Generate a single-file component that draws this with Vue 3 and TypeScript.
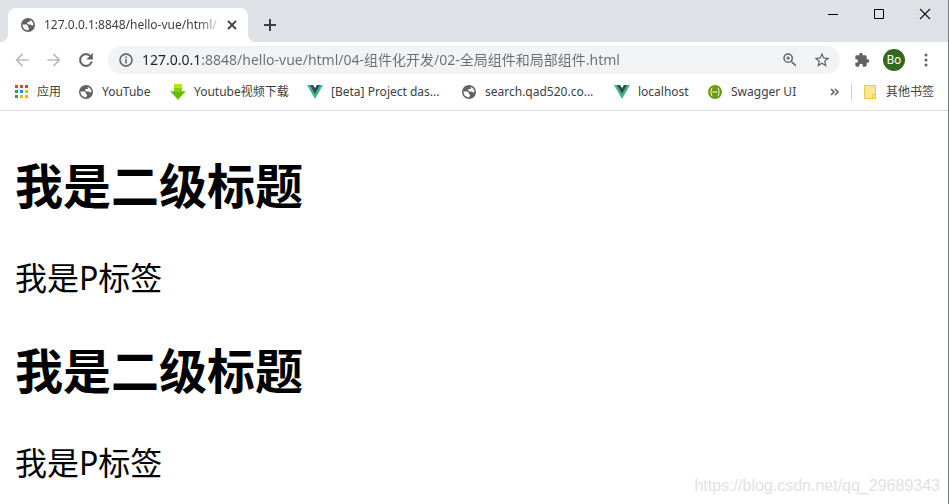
<script setup lang="ts">
import { ref } from 'vue'

interface Bookmark {
  label: string
  icon: 'apps' | 'globe' | 'download' | 'vue' | 'swagger'
}

const address = ref('127.0.0.1:8848/hello-vue/html/04-组件化开发/02-全局组件和局部组件.html')

const bookmarks: Bookmark[] = [
  { label: '应用', icon: 'apps' },
  { label: 'YouTube', icon: 'globe' },
  { label: 'Youtube视频下载', icon: 'download' },
  { label: '[Beta] Project das...', icon: 'vue' },
  { label: 'search.qad520.co...', icon: 'globe' },
  { label: 'localhost', icon: 'vue' },
  { label: 'Swagger UI', icon: 'swagger' },
]

const appColors = ['#f03a32', '#f03a32', '#f03a32', '#34a055', '#2a8cf0', '#f5b400', '#34a055', '#f5b400', '#f5b400']

const sections = [
  { title: '我是二级标题', text: '我是P标签' },
  { title: '我是二级标题', text: '我是P标签' },
]
</script>

<template>
  <div class="window">
    <header class="tabstrip">
      <div class="tab">
        <svg class="icon16" viewBox="0 0 16 16">
          <circle cx="8" cy="8" r="7" fill="#5f6368" />
          <path d="M2.5 7.6h3.2c1.5 0 2 .7 2 1.7s.6 1.2 1.3 1.2v1.2c0 .6-.9.6-.9 1.5v.2C4.6 13.4 2.500 11 2.500 7.600zM9.800 2.900c2 .8 3.500 2.500 3.700 4.800-.7.9-1.600.9-2.200.3-.4-.5-1-.5-1.800-.5-1.400 0-2.300-.5-2.300-1.300s.6-1.100 1.500-1.100 1.300-.3 1.300-.8-.3-.7-.2-1.400z" fill="#fff" />
        </svg>
        <span class="tab-title">127.0.0.1:8848/hello-vue/html/</span>
        <button class="plain" type="button" aria-label="关闭标签页">
          <svg class="icon16" viewBox="0 0 16 16"><path d="M4 4l8 8M12 4l-8 8" stroke="#3c4043" stroke-width="1.8" /></svg>
        </button>
      </div>
      <button class="plain new-tab" type="button" aria-label="打开新的标签页">
        <svg class="icon16" viewBox="0 0 16 16"><path d="M8 2v12M2 8h12" stroke="#3c4043" stroke-width="2" /></svg>
      </button>
      <div class="window-controls">
        <button class="plain" type="button" aria-label="最小化">
          <svg class="icon16" viewBox="0 0 16 16"><path d="M3 8.500h10" stroke="#000" /></svg>
        </button>
        <button class="plain" type="button" aria-label="最大化">
          <svg class="icon16" viewBox="0 0 16 16"><path d="M3.500 3.500h9v9h-9z" fill="none" stroke="#000" /></svg>
        </button>
        <button class="plain" type="button" aria-label="关闭">
          <svg class="icon16" viewBox="0 0 16 16"><path d="M3 3l10 10M13 3L3 13" stroke="#111" stroke-width="1.100" /></svg>
        </button>
      </div>
    </header>

    <nav class="toolbar">
      <div class="nav-buttons">
        <button class="plain" type="button" aria-label="后退">
          <svg class="icon20 muted" viewBox="0 0 24 24"><path d="M20 11H7.830l5.590-5.590L12 4l-8 8 8 8 1.410-1.410L7.830 13H20z" /></svg>
        </button>
        <button class="plain" type="button" aria-label="前进">
          <svg class="icon20 muted" viewBox="0 0 24 24"><path d="M4 11h12.170l-5.590-5.590L12 4l8 8-8 8-1.410-1.410L16.170 13H4z" /></svg>
        </button>
        <button class="plain" type="button" aria-label="重新加载">
          <svg class="icon20" viewBox="0 0 24 24"><path d="M17.650 6.350A7.958 7.958 0 0 0 12 4c-4.420 0-7.990 3.580-7.990 8s3.570 8 7.990 8c3.730 0 6.840-2.550 7.730-6h-2.080A5.990 5.990 0 0 1 12 18c-3.310 0-6-2.690-6-6s2.690-6 6-6c1.660 0 3.140.690 4.220 1.780L13 11h7V4z" stroke="#5f6368" stroke-width=".5" /></svg>
        </button>
      </div>
      <div class="omnibox">
        <svg class="icon16" viewBox="0 0 24 24"><path d="M11 17h2v-6h-2zM12 2a10 10 0 1 0 0 20 10 10 0 0 0 0-20zm0 18a8 8 0 1 1 0-16 8 8 0 0 1 0 16zM11 9h2V7h-2z" stroke="#5f6368" stroke-width=".4" /></svg>
        <input v-model="address" class="address" type="text" aria-label="地址栏" spellcheck="false" />
        <button class="plain" type="button" aria-label="缩放">
          <svg class="icon18" viewBox="0 0 24 24"><path d="M15.500 14h-.790l-.280-.270A6.470 6.470 0 0 0 16 9.500 6.500 6.500 0 1 0 9.500 16c1.610 0 3.090-.590 4.230-1.570l.270.280v.790l5 4.990L20.490 19zM9.500 14a4.500 4.500 0 1 1 0-9 4.500 4.500 0 0 1 0 9zm.700-7H8.800v1.800H7v1.400h1.800V12h1.400v-1.800H12V8.800h-1.800z" /></svg>
        </button>
        <button class="plain" type="button" aria-label="为此网页添加书签">
          <svg class="icon18" viewBox="0 0 24 24"><path d="M22 9.240l-7.190-.620L12 2 9.190 8.630 2 9.240l5.460 4.730L5.820 21 12 17.270 18.180 21l-1.630-7.030zM12 15.400l-3.760 2.270 1-4.280-3.320-2.880 4.380-.380L12 6.100l1.710 4.040 4.380.380-3.320 2.880 1 4.280z" /></svg>
        </button>
      </div>
      <div class="actions">
        <button class="plain" type="button" aria-label="扩展程序">
          <svg class="icon16" viewBox="0 0 24 24"><path d="M20.500 11H19V7c0-1.100-.9-2-2-2h-4V3.500a2.500 2.500 0 0 0-5 0V5H4a2 2 0 0 0-2 2v3.800h1.500a2.700 2.700 0 0 1 0 5.400H2V20c0 1.100.9 2 2 2h3.800v-1.500a2.700 2.700 0 0 1 5.400 0V22H17a2 2 0 0 0 2-2v-4h1.500a2.500 2.500 0 0 0 0-5z" /></svg>
        </button>
        <button class="avatar" type="button">Bo</button>
        <button class="plain" type="button" aria-label="菜单">
          <svg class="icon16" viewBox="0 0 16 16"><circle cx="8" cy="3" r="1.500" /><circle cx="8" cy="8" r="1.500" /><circle cx="8" cy="13" r="1.500" /></svg>
        </button>
      </div>
    </nav>

    <nav class="bookmarks">
      <div class="bookmark-list">
        <a v-for="item in bookmarks" :key="item.label" class="bookmark" href="#">
          <svg v-if="item.icon === 'apps'" class="icon16" viewBox="0 0 16 16">
            <rect v-for="(color, i) in appColors" :key="i" :x="2 + (i % 3) * 5" :y="1 + Math.floor(i / 3) * 5" width="3" height="3" :fill="color" />
          </svg>
          <svg v-else-if="item.icon === 'globe'" class="icon16" viewBox="0 0 16 16">
            <circle cx="8" cy="8" r="7" fill="#5f6368" />
            <path d="M2.500 7.600h3.200c1.500 0 2 .7 2 1.700s.6 1.200 1.300 1.200v1.200c0 .6-.9.6-.9 1.500v.2C4.600 13.400 2.500 11 2.500 7.600zM9.800 2.900c2 .8 3.500 2.500 3.700 4.800-.7.9-1.600.9-2.200.3-.4-.5-1-.5-1.800-.5-1.400 0-2.300-.5-2.300-1.300s.6-1.100 1.500-1.100 1.300-.3 1.300-.8-.3-.7-.2-1.400z" fill="#fff" />
          </svg>
          <svg v-else-if="item.icon === 'download'" class="icon16" viewBox="0 0 16 16">
            <path d="M4 0h8v7h4l-8 9-8-9h4z" fill="#84d00c" />
            <path d="M4 0h8v4H4z" fill="#b5e61d" />
            <path d="M2 8h12l-6 7z" fill="#68b800" />
          </svg>
          <svg v-else-if="item.icon === 'vue'" class="icon16" viewBox="0 0 16 16">
            <path d="M0 1h6l2 3 2-3h6L8 15z" fill="#41b883" />
            <path d="M3 1h3l2 3.500L10 1h3L8 10z" fill="#35495e" />
          </svg>
          <svg v-else class="icon16" viewBox="0 0 16 16">
            <circle cx="8" cy="8" r="7" fill="#6b9a08" />
            <path d="M5.500 4c-2 0-.5 3.500-2 4 1.500.5 0 4 2 4M10.500 4c2 0 .5 3.500 2 4-1.500.5 0 4-2 4M5.500 8h5" fill="none" stroke="#fff" />
          </svg>
          <span>{{ item.label }}</span>
        </a>
      </div>
      <button class="plain" type="button" aria-label="更多书签">
        <svg class="icon16" viewBox="0 0 16 16"><path d="M4 5l3 3-3 3M8 5l3 3-3 3" fill="none" stroke="#5f6368" stroke-width="1.600" /></svg>
      </button>
      <a class="bookmark other" href="#">
        <svg class="icon16" viewBox="0 0 16 16"><path d="M2.500 1.500h11v13h-11z" fill="#ffe694" stroke="#efc84a" /><path d="M10.500 14.500v-4h3v4z" fill="#ffe694" stroke="#efc84a" /></svg>
        <span>其他书签</span>
      </a>
    </nav>

    <main class="page">
      <section v-for="(section, i) in sections" :key="i">
        <h2>{{ section.title }}</h2>
        <p>{{ section.text }}</p>
      </section>
    </main>
    <span class="watermark">https://blog.csdn.net/qq_29689343</span>
  </div>
</template>

<style>
body {
  margin: 0;
}
</style>

<style scoped>
.window {
  position: relative;
  display: flex;
  flex-direction: column;
  box-sizing: border-box;
  min-height: 100vh;
  border-right: 1px solid #77797c;
  background: #fff;
  color: #3c4043;
  font: 12px/16px "Noto Sans", "Noto Sans CJK SC", sans-serif;
}

svg {
  display: block;
  flex: none;
  fill: #5f6368;
}

.icon16 {
  width: 16px;
  height: 16px;
}

.icon18 {
  width: 18px;
  height: 18px;
}

.icon20 {
  width: 20px;
  height: 20px;
}

.muted {
  fill: #babcbe;
}

.plain {
  flex: none;
  padding: 0;
  border: 0;
  background: none;
}

.tabstrip {
  display: flex;
  height: 42px;
  padding-left: 8px;
  background: #dee1e6;
}

.tab {
  position: relative;
  display: flex;
  align-items: center;
  gap: 8px;
  box-sizing: border-box;
  width: 240px;
  margin-top: 8px;
  padding: 0 8px 0 12px;
  border-radius: 8px 8px 0 0;
  background: #fff;
}

.tab::before,
.tab::after {
  content: "";
  position: absolute;
  bottom: 0;
  width: 8px;
  height: 8px;
}

.tab::before {
  right: 100%;
  background: radial-gradient(circle at 0 0, #dee1e6 8px, #fff 8px);
}

.tab::after {
  left: 100%;
  background: radial-gradient(circle at 100% 0, #dee1e6 8px, #fff 8px);
}

.tab-title {
  flex: 1;
  min-width: 0;
  margin-right: -8px;
  white-space: nowrap;
  mask-image: linear-gradient(to right, #000 85%, transparent);
}

.new-tab {
  align-self: center;
  margin: 8px 0 0 14px;
}

.window-controls {
  display: flex;
  gap: 30px;
  margin: 6px 15px 0 auto;
  height: 16px;
}

.toolbar {
  display: flex;
  align-items: center;
  height: 36px;
  padding: 0 14px 0 12px;
}

.nav-buttons {
  display: flex;
  gap: 12px;
  margin-right: 12px;
}

.omnibox {
  display: flex;
  flex: 1;
  align-items: center;
  gap: 14px;
  height: 28px;
  padding: 0 9px 0 10px;
  border-radius: 14px;
  background: #f1f3f4;
}

.address {
  flex: 1;
  min-width: 0;
  height: 24px;
  margin-left: -6px;
  padding: 0;
  border: 0;
  outline: 0;
  background: linear-gradient(to right, #202124 59px, #6b6f74 59px);
  background-clip: text;
  color: transparent;
  caret-color: #202124;
  font: 14px/24px "Noto Sans", "Noto Sans CJK SC", sans-serif;
}

.actions {
  display: flex;
  align-items: center;
  gap: 13px;
  margin-left: 14px;
}

.avatar {
  width: 22px;
  height: 22px;
  padding: 0;
  border: 0;
  border-radius: 50%;
  background: #33691e;
  color: #fff;
  font: 12px/22px Roboto, sans-serif;
}

.bookmarks {
  display: flex;
  align-items: center;
  height: 28px;
  padding: 0 14px 4px 13px;
  border-bottom: 1px solid #d9dbdd;
}

.bookmark-list {
  display: grid;
  flex: 1;
  grid-template-columns: 65px 92px 137px 154px 153px 93px auto;
}

.bookmark {
  display: flex;
  align-items: center;
  gap: 8px;
  color: inherit;
  text-decoration: none;
  white-space: nowrap;
}

.other {
  margin-left: 8px;
  padding-left: 10px;
  border-left: 1px solid #c8cacd;
}

.page {
  display: flex;
  flex: 1;
  flex-direction: column;
  gap: 40px;
  padding: 43px 15px 0;
  color: #000;
}

.page h2 {
  margin: 0 0 40px;
  font-size: 48px;
  line-height: 63px;
}

.page p {
  margin: 0;
  font-size: 32px;
  line-height: 42px;
}

.watermark {
  position: absolute;
  right: 8px;
  bottom: 8px;
  color: #e2e2e2;
  font: 16px/20px "Liberation Sans", sans-serif;
}
</style>
